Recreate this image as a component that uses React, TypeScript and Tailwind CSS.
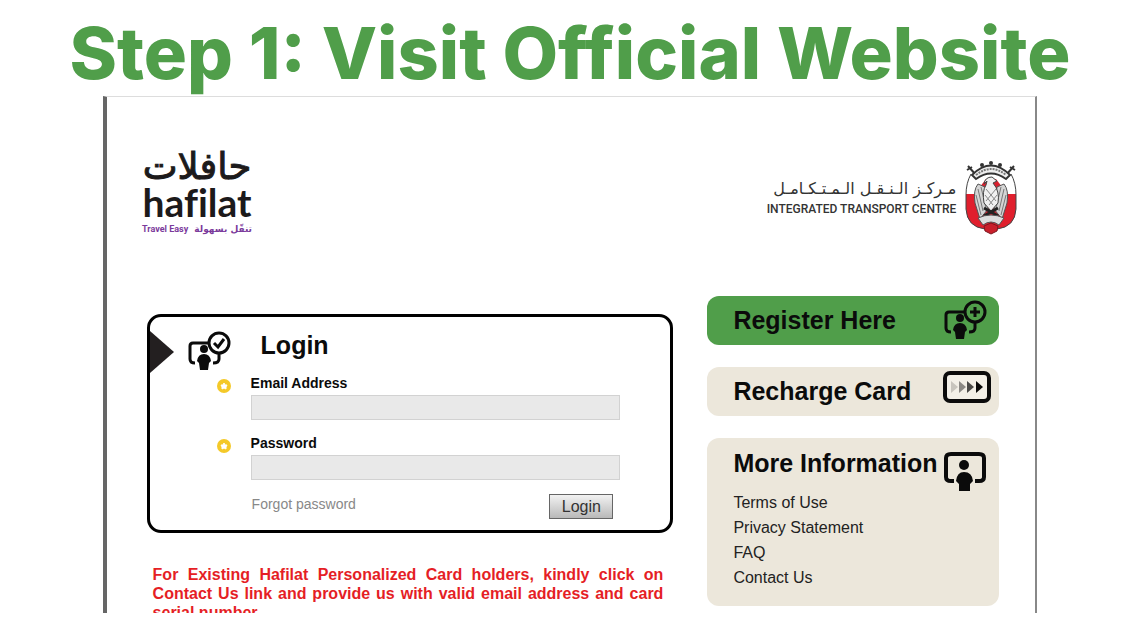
import type { ReactNode } from "react";

const links = ["Terms of Use", "Privacy Statement", "FAQ", "Contact Us"];

function HafilatLogo() {
  return (
    <svg width="116" height="90" viewBox="0 0 116 90" role="img" aria-label="hafilat">
      <text
        x="57"
        y="30"
        textAnchor="middle"
        fontSize="37"
        fill="#1c1a1b"
        stroke="#1c1a1b"
        strokeWidth="1"
        className="font-['DejaVu_Sans',sans-serif]"
      >
        حافلات
      </text>
      <text
        x="57"
        y="68"
        textAnchor="middle"
        fontSize="39"
        fill="#1c1a1b"
        className="font-['Lato',sans-serif] font-bold [font-variant-ligatures:none]"
      >
        hafilat
      </text>
      <text x="2" y="83" fontSize="9" fill="#7b3a9b" className="font-['Roboto',sans-serif] font-bold">
        Travel Easy
      </text>
      <text x="112" y="83" textAnchor="end" fontSize="9" fill="#7b3a9b" className="font-['DejaVu_Sans',sans-serif] font-bold">
        تنقّل بسهولة
      </text>
    </svg>
  );
}

function Emblem() {
  return (
    <svg width="54" height="74" viewBox="0 0 54 74" aria-hidden="true">
      <path d="M7 13Q2 22 2 34V48Q3 66 21 68H33Q51 66 52 48V34Q52 22 47 13Z" fill="#fff" />
      <path d="M2 33H52V48Q51 66 33 68H21Q3 66 2 48Z" fill="#e01f2d" />
      <path d="M7 13Q2 22 2 34V48Q3 66 21 68H33Q51 66 52 48V34Q52 22 47 13" fill="none" stroke="#444" strokeWidth="1" />
      <path d="M22 18L12 31L10 45L18 62H36L44 45L42 31L32 18Z" fill="#d8202e" />
      <path d="M4 5L12 14M50 5L42 14M3 9L8 6M51 9L46 6" stroke="#333" strokeWidth="2" />
      <path d="M8 14Q27 -5 46 14L42 18Q27 7 12 18Z" fill="#eee" stroke="#333" strokeWidth="2" />
      <path d="M12 14Q27 2 42 14" fill="none" stroke="#777" strokeWidth="2" strokeDasharray="2 1" />
      <g fill="#333">
        <circle cx="27" cy="2" r="2" />
        <circle cx="18" cy="4" r="2" />
        <circle cx="36" cy="4" r="2" />
      </g>
      <path d="M21 26L14 23Q9 29 11 42L16 58L24 48ZM33 26L40 23Q45 29 43 42L38 58L30 48Z" fill="#d5d5d5" stroke="#555" strokeWidth="1" />
      <path d="M14 28L19 50M17 26L22 47M40 28L35 50M37 26L32 47M12 34L17 54M42 34L37 54" stroke="#777" strokeWidth="1" />
      <path d="M20 23Q21 16 28 16L33 20L29 22Q36 30 34 42L27 50L20 42Q18 30 22 24L23 20Z" fill="#f0f0f0" stroke="#444" strokeWidth="1" />
      <path d="M22 28L32 40M32 28L22 40M21 34L29 44M33 34L25 44" stroke="#888" strokeWidth="1" />
      <path d="M20 47L34 55M34 47L20 55" stroke="#222" strokeWidth="3" />
      <path d="M14 57Q27 51 40 57L35 64Q27 58 19 64Z" fill="#ddd" stroke="#555" strokeWidth="1" />
      <path d="M20 65L27 62L34 65L33 70L27 73L21 70Z" fill="#c91f2b" stroke="#7c1820" strokeWidth="1" />
    </svg>
  );
}

function PersonIcon({ children }: { children: ReactNode }) {
  return (
    <svg width="45" height="40" viewBox="0 0 45 40" fill="none" stroke="#0b0b0b" strokeWidth="3" aria-hidden="true">
      <path d="M21 12H6Q3 12 3 15V28Q3 32 8 32M32 23V28Q32 32 26 32" />
      <circle cx="32" cy="12" r="10" />
      {children}
      <circle cx="17" cy="18" r="4" fill="#0b0b0b" stroke="none" />
      <path d="M17 23Q23 23 24 30L22 32L21 39H13L12 32L10 30Q11 23 17 23Z" fill="#0b0b0b" stroke="none" />
    </svg>
  );
}

function RechargeIcon() {
  return (
    <svg width="48" height="32" viewBox="0 0 48 32" aria-hidden="true">
      <rect x="2" y="2" width="44" height="28" rx="5" fill="#f3f0e8" stroke="#0b0b0b" strokeWidth="4" />
      <path d="M8 10L15 16L8 22Z" fill="#c8c5be" />
      <path d="M16 10L23 16L16 22Z" fill="#8b8985" />
      <path d="M24 10L31 16L24 22Z" fill="#4b4a48" />
      <path d="M33 10L40 16L33 22Z" fill="#0b0b0b" />
    </svg>
  );
}

function BoardIcon() {
  return (
    <svg width="45" height="40" viewBox="0 0 45 40" aria-hidden="true">
      <path d="M11 29H8Q3 29 3 25V6Q3 2 8 2H36Q41 2 41 6V25Q41 29 36 29H32" fill="none" stroke="#0b0b0b" strokeWidth="4" />
      <circle cx="21" cy="13" r="5" fill="#0b0b0b" />
      <path d="M21 20Q29 20 30 29L27 32V39H16V32L13 29Q14 20 21 20Z" fill="#0b0b0b" />
    </svg>
  );
}

function StarBullet() {
  return (
    <svg width="14" height="14" viewBox="0 0 14 14" className="mt-1.5 shrink-0" aria-hidden="true">
      <circle cx="7" cy="7" r="7" fill="#f4c929" />
      <path d="M7 4L8 6L10 6L9 8L9 10L7 9L5 10L5 8L4 6L6 6Z" fill="#fff" stroke="#fff" strokeWidth="1" />
    </svg>
  );
}

interface FieldProps {
  id: string;
  label: string;
  type: string;
}

function Field({ id, label, type }: FieldProps) {
  return (
    <div className="flex gap-5">
      <StarBullet />
      <div className="flex flex-1 flex-col gap-0.5">
        <label htmlFor={id} className="text-sm leading-5 font-bold">
          {label}
        </label>
        <input id={id} type={type} className="h-[25px] w-full border border-[#d2d2d2] bg-[#e9e9e9] px-2 text-sm" />
      </div>
    </div>
  );
}

interface SideButtonProps {
  title: string;
  icon: ReactNode;
  color: string;
}

function SideButton({ title, icon, color }: SideButtonProps) {
  return (
    <button className={`flex h-[49px] items-start justify-between rounded-xl pl-[26px] text-left ${color}`}>
      <span className="text-[25px] leading-[49px] font-bold">{title}</span>
      <span className="mt-1 w-14">{icon}</span>
    </button>
  );
}

function LoginForm() {
  return (
    <form
      onSubmit={(e) => e.preventDefault()}
      className="relative rounded-[14px] border-3 border-black pt-[14px] pr-[50px] pb-[11px] pl-[37px]"
    >
      <svg width="24" height="42" viewBox="0 0 24 42" className="absolute top-[14px] left-0" aria-hidden="true">
        <path d="M0 0L24 21L0 42Z" fill="#231f20" />
      </svg>
      <div className="flex h-[42px] gap-[29px]">
        <PersonIcon>
          <path d="M27 12L31 16L37 8" />
        </PersonIcon>
        <h2 className="text-[25px] leading-7 font-bold">Login</h2>
      </div>
      <div className="flex flex-col gap-[13px] pl-[30px]">
        <Field id="email" label="Email Address" type="email" />
        <Field id="password" label="Password" type="password" />
      </div>
      <div className="mt-[14px] flex items-start justify-between pr-[7px] pl-[65px]">
        <a href="#forgot" className="text-sm leading-5 text-[#888]">
          Forgot password
        </a>
        <button
          type="submit"
          className="h-[25px] w-16 border border-[#666] bg-linear-to-b from-[#f2f2f2] to-[#b9b9b9] text-base leading-5 text-[#333]"
        >
          Login
        </button>
      </div>
    </form>
  );
}

export default function App() {
  return (
    <div className="flex h-screen flex-col bg-white pb-[7px] font-['Liberation_Sans',Arial,sans-serif] text-[#0b0b0b]">
      <h1 className="h-24 shrink-0 text-center font-['Inter',sans-serif] text-[72px] leading-[106px] font-extrabold whitespace-nowrap text-[#509e4a]">
        Step 1: Visit Official Website
      </h1>
      <main className="mx-auto min-h-0 w-[82%] flex-1 overflow-hidden border-t border-r-2 border-l-4 border-t-[#ddd] border-r-[#888] border-l-[#666]">
        <header className="flex h-[199px] items-start justify-between pt-[52px] pr-[17px] pl-[33px]">
          <HafilatLogo />
          <div className="flex items-start gap-2 pt-3">
            <div className="pt-[18px] text-[#333]">
              <p dir="rtl" lang="ar" className="font-['DejaVu_Sans',sans-serif] text-base leading-5">
                مـركـز الـنـقـل الـمـتـكـامـل
              </p>
              <p className="font-['Roboto',sans-serif] text-xs leading-5 font-medium">INTEGRATED TRANSPORT CENTRE</p>
            </div>
            <Emblem />
          </div>
        </header>
        <div className="flex gap-[34px] pr-9 pl-10">
          <section className="flex-1 pt-[18px]">
            <LoginForm />
            <p className="mt-8 pr-[10px] pl-[6px] text-justify text-base leading-[19px] font-bold text-[#e51e25]">
              For Existing Hafilat Personalized Card holders, kindly click on Contact Us link and provide us with valid
              email address and card serial number.
            </p>
          </section>
          <aside className="flex w-[292px] flex-col gap-[22px]">
            <SideButton
              title="Register Here"
              color="bg-[#509e4a]"
              icon={
                <PersonIcon>
                  <path d="M27 12H37M32 7V17" />
                </PersonIcon>
              }
            />
            <SideButton title="Recharge Card" color="bg-[#ece7db]" icon={<RechargeIcon />} />
            <nav className="rounded-xl bg-[#ece7db] pt-[11px] pb-4 pl-[26px]">
              <div className="flex h-[41px] items-start justify-between">
                <h2 className="text-[25px] leading-7 font-bold whitespace-nowrap">More Information</h2>
                <span className="mt-[3px] w-14">
                  <BoardIcon />
                </span>
              </div>
              <ul>
                {links.map((link) => (
                  <li key={link} className="text-base leading-[25px] text-[#222]">
                    <a href="#info">{link}</a>
                  </li>
                ))}
              </ul>
            </nav>
          </aside>
        </div>
      </main>
    </div>
  );
}
